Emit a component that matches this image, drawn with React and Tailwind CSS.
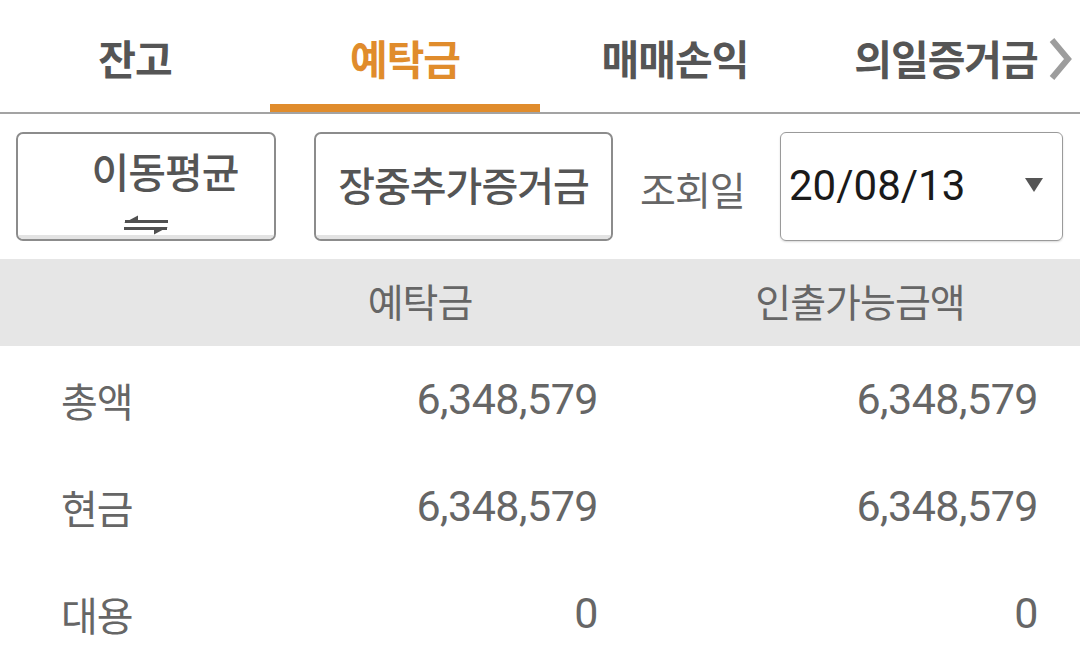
import React from "react";

const kr = { fontFamily: '"Noto Sans CJK KR", "Noto Sans", sans-serif' };
const num = { fontFamily: 'Roboto, "Noto Sans CJK KR", sans-serif' };

const tabs = ["잔고", "예탁금", "매매손익", "의일증거금"];

const rows = [
  { label: "총액", a: "6,348,579", b: "6,348,579" },
  { label: "현금", a: "6,348,579", b: "6,348,579" },
  { label: "대용", a: "0", b: "0" },
];

function SwapIcon() {
  return (
    <svg width="48" height="20" viewBox="0 0 48 20" className="block shrink-0">
      <path d="M3 6.5 H46" stroke="#505050" strokeWidth="2.8" fill="none" />
      <path d="M2 7.9 L16 0.5 L16 7.9 Z" fill="#505050" />
      <path d="M2 13.5 H45" stroke="#505050" strokeWidth="2.8" fill="none" />
      <path d="M46 12.1 L32 19.5 L32 12.1 Z" fill="#505050" />
    </svg>
  );
}

export default function App() {
  return (
    <div className="w-[1080px] h-[667px] bg-white overflow-hidden" style={kr}>
      {/* tabs */}
      <div className="grid grid-cols-4 h-[114px] border-b-2 border-[#a3a3a3]">
        {tabs.map((t, i) => (
          <div key={t} className="relative flex items-center justify-center">
            <span
              className={
                "text-[41px] font-bold leading-none pt-[2px] tracking-[-1px] " +
                (i === 1 ? "text-[#e08c2c]" : "text-[#555]") +
                (i === 3 ? " ml-[2px]" : "")
              }
            >
              {t}
            </span>
            {i === 3 && (
              <svg width="30" height="44" viewBox="0 0 30 44" className="absolute right-[5px] top-[37px]">
                <path d="M7 3 L23 22 L7 41" stroke="#9d9d9d" strokeWidth="6" fill="none" />
              </svg>
            )}
            {i === 1 && <div className="absolute left-0 right-0 bottom-0 h-[8px] bg-[#e08c2c]" />}
          </div>
        ))}
      </div>

      {/* controls */}
      <div className="flex items-center h-[109px] mt-[18px] pl-[16px] pr-[17px]">
        <div className="w-[260px] h-full rounded-[7px] border-2 border-[#8c8c8c] bg-white flex flex-col overflow-hidden cursor-pointer">
          <div className="flex-1 flex flex-col items-center justify-between pt-[16px]">
            <span className="block text-[41px] font-medium text-[#555] leading-none ml-[38px] tracking-[-1px]">이동평균</span>
            <SwapIcon />
          </div>
          <div className="h-[4px] bg-[#e3e3e3]" />
        </div>
        <div className="ml-[38px] w-[299px] h-full rounded-[7px] border-2 border-[#8c8c8c] bg-white flex flex-col overflow-hidden cursor-pointer">
          <div className="flex-1 flex items-center justify-center">
            <span className="text-[40px] font-medium text-[#555] leading-none -mt-[2px] tracking-[-1px]">장중추가증거금</span>
          </div>
          <div className="h-[4px] bg-[#e3e3e3]" />
        </div>
        <span className="ml-[27px] text-[39px] text-[#666] leading-none pt-[4px] tracking-[-1px]">조회일</span>
        <div className="ml-auto w-[283px] h-full rounded-[6px] border border-[#9a9a9a] shadow-[0_1px_2px_rgba(0,0,0,0.15)] flex items-center pl-[8px] pr-[18px]">
          <span className="text-[42px] text-[#1a1a1a] leading-none -mt-[2px]" style={num}>
            20/08/13
          </span>
          <svg width="20" height="16" viewBox="0 0 20 16" className="ml-auto -mt-[4px]">
            <path d="M1 1 H19 L10 15 Z" fill="#555" />
          </svg>
        </div>
      </div>

      {/* header */}
      <div className="flex items-center h-[87px] mt-[18px] bg-[#e6e6e6] text-[39px] text-[#666] leading-none tracking-[-1px]">
        <div className="w-[240px]" />
        <div className="w-[360px] text-center -mt-[4px]">예탁금</div>
        <div className="flex-1 text-center -mt-[4px] pl-[40px]">인출가능금액</div>
      </div>

      {/* rows */}
      {rows.map((r) => (
        <div key={r.label} className="flex items-center h-[107px] text-[#666]">
          <div className="w-[240px] pl-[61px] text-[40px] leading-none tracking-[-1px]">{r.label}</div>
          <div className="w-[358px] text-right text-[43px] leading-none tracking-[-0.5px]" style={num}>
            {r.a}
          </div>
          <div className="w-[440px] text-right text-[43px] leading-none tracking-[-0.5px]" style={num}>
            {r.b}
          </div>
        </div>
      ))}
    </div>
  );
}
